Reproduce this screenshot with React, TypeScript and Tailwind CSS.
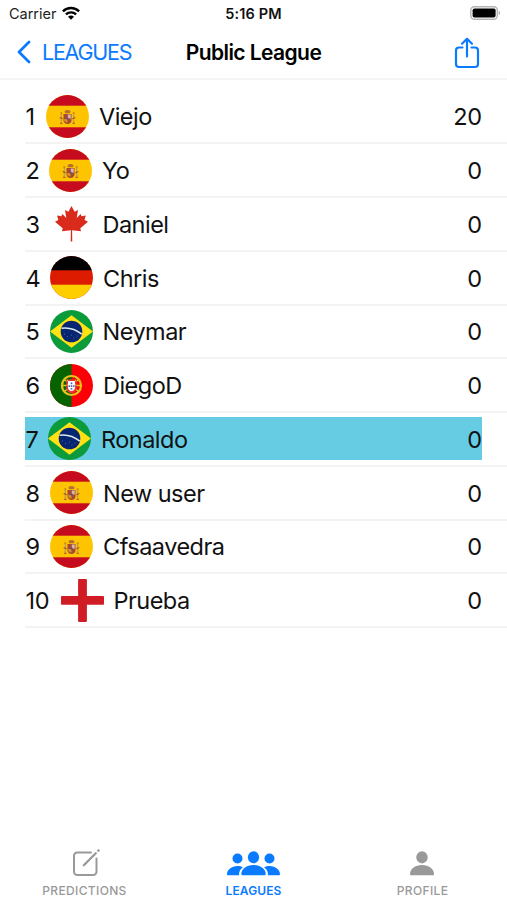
import React from 'react';

type Country = 'spain' | 'canada' | 'germany' | 'brazil' | 'portugal' | 'england';

interface Player {
  rank: number;
  name: string;
  country: Country;
  points: number;
  rankWidth: string;
  isMe?: boolean;
}

const players: Player[] = [
  { rank: 1, name: 'Viejo', country: 'spain', points: 20, rankWidth: 'w-[21px]' },
  { rank: 2, name: 'Yo', country: 'spain', points: 0, rankWidth: 'w-[24px]' },
  { rank: 3, name: 'Daniel', country: 'canada', points: 0, rankWidth: 'w-[24.5px]' },
  { rank: 4, name: 'Chris', country: 'germany', points: 0, rankWidth: 'w-[25px]' },
  { rank: 5, name: 'Neymar', country: 'brazil', points: 0, rankWidth: 'w-[24.5px]' },
  { rank: 6, name: 'DiegoD', country: 'portugal', points: 0, rankWidth: 'w-[25px]' },
  { rank: 7, name: 'Ronaldo', country: 'brazil', points: 0, rankWidth: 'w-[23px]', isMe: true },
  { rank: 8, name: 'New user', country: 'spain', points: 0, rankWidth: 'w-[25px]' },
  { rank: 9, name: 'Cfsaavedra', country: 'spain', points: 0, rankWidth: 'w-[25px]' },
  { rank: 10, name: 'Prueba', country: 'england', points: 0, rankWidth: 'w-[35.5px]' },
];

const SpainFlag = () => (
  <>
    <rect width="43" height="43" fill="#ffc400" />
    <rect width="43" height="10.7" fill="#c60b1e" />
    <rect y="32.3" width="43" height="10.7" fill="#c60b1e" />
    {/* Coat of arms */}
    <path d="M18.5 16.500c.8-2 5.200-2 6 0l-.7 1.800h-4.600z" fill="#b5712d" />
    <path d="M17.500 19h8v6.500c0 4.500-8 4.500-8 0z" fill="#a8482f" />
    <path d="M21.800 19.500h3v4h-3z" fill="#d7b5b0" />
    <path d="M18.200 24h3.300v3.600c-2-.2-3.300-1-3.300-2.300z" fill="#d99021" />
    <circle cx="21.600" cy="23.700" r="1.100" fill="#4c568c" />
    <path d="M15.300 18.500v9M27.700 18.500v9" stroke="#b39a66" strokeWidth="1.200" />
    <path d="M13.700 22.500l3 1.200M26.300 23.700l3-1.200M14 28.300h2.600M26.400 28.300H29" stroke="#a64a29" strokeWidth="1.100" />
    <path d="M14.400 18h1.800M26.800 18h1.800" stroke="#a66320" strokeWidth="1" />
  </>
);

const BrazilFlag = () => (
  <>
    <rect width="43" height="43" fill="#0b9b3b" />
    <path d="M0 21.500 21.500 5.300 43 21.500 21.500 37.700z" fill="#ffe114" />
    <circle cx="21.500" cy="21.500" r="10.800" fill="#062672" />
    <path d="M11.500 18.200c7-1 14.500 1.300 20.300 6" fill="none" stroke="#dce8ef" strokeWidth="1.500" />
    <g fill="#a9b9db">
      <circle cx="14.500" cy="24" r=".4" />
      <circle cx="17.500" cy="26.500" r=".4" />
      <circle cx="21.500" cy="25" r=".4" />
      <circle cx="24" cy="28" r=".4" />
      <circle cx="27" cy="26" r=".4" />
    </g>
  </>
);

const PortugalFlag = () => (
  <>
    <rect width="43" height="43" fill="#fb0007" />
    <rect width="21.500" height="43" fill="#056400" />
    <circle cx="21.500" cy="21.500" r="9.500" fill="none" stroke="#e6c51b" strokeWidth="2.200" />
    <path d="M14.500 15.500 28.500 27.500M28.500 15.500 14.500 27.500M12 21.500h19" stroke="#e6c51b" strokeWidth="1.400" />
    <path d="M16.300 15.500h10.400v8c0 7.500-10.400 7.500-10.400 0z" fill="#e8383b" />
    <path d="M18 17h7v6.300c0 5-7 5-7 0z" fill="#fff" />
    <path d="M20.700 18.500h1.600v1.700h-1.600zM18.500 21.200h1.400v1.800h-1.400zM20.700 21.200h1.600v1.800h-1.600zM23.100 21.200h1.400v1.800h-1.400zM20.700 24h1.600v1.500h-1.600z" fill="#4a60ad" />
    <path d="M17 16.200h1M25 16.200h1M16.800 21h1M25.300 21h1" stroke="#f4d94b" strokeWidth="1.100" />
  </>
);

const flags: Record<Country, React.ReactNode> = {
  spain: <SpainFlag />,
  brazil: <BrazilFlag />,
  portugal: <PortugalFlag />,
  germany: (
    <>
      <rect width="43" height="43" fill="#dd1b00" />
      <rect width="43" height="14.3" fill="#000" />
      <rect y="28.7" width="43" height="14.3" fill="#ffce00" />
    </>
  ),
  canada: (
    <path
      d="M21.500 4 24.600 9.700 28 8.100 26.700 15.900 30.600 12 31.600 14.300 35.800 13.500 34.500 17.900 38 19.800 30.300 26.300 31 29.200 22.100 28.300 22.300 39.500H20.700L20.900 28.300 12 29.200 12.700 26.300 5 19.800 8.300 17.900 7 13.500 11.400 14.300 12.400 12 16.300 15.900 15 8.100 18.400 9.700Z"
      fill="#d92b1c"
    />
  ),
  england: <path d="M18 0h7q.9 0 .9.9v16.200h16.200q.9 0 .9.900v6.800q0 .9-.9.900H25.900v16.400q0 .9-.9.900h-7q-.9 0-.9-.9V25.700H.9q-.9 0-.9-.9V18q0-.9.900-.9h16.200V.9q0-.9.900-.9z" fill="#d01c25" />,
};

const Flag: React.FC<{ country: Country }> = ({ country }) => (
  <svg
    viewBox="0 0 43 43"
    className={`h-[43px] w-[43px] shrink-0 ${country === 'england' ? '' : 'rounded-full'}`}
  >
    {flags[country]}
  </svg>
);

const StatusBar = () => (
  <div className="grid h-[27px] grid-cols-3 items-center px-[9px]">
    <div className="flex items-center gap-[6px]">
      <span className="text-[14.5px] tracking-[-0.02px] text-[#222]">Carrier</span>
      <svg viewBox="0 0 18 14" className="-mt-[2px] h-[14px] w-[18px]" fill="none" stroke="#000" strokeWidth="2.4">
        <path d="M.9 5.300C5.500.9 12.500.9 17.100 5.300" />
        <path d="M3.900 8.400c2.900-2.700 7.300-2.700 10.200 0" />
        <path d="M6 10.700c1.800-1.600 4.200-1.600 6 0L9 13.800z" fill="#000" stroke="none" />
      </svg>
    </div>
    <span className="text-center text-[14.5px] font-semibold tracking-[0.15px] text-[#111]">5:16 PM</span>
    <div className="-mr-[3px] -mt-[1px] flex justify-end">
      <svg viewBox="0 0 31 14" className="h-[14px] w-[31px]">
        <rect x=".8" y=".8" width="26.500" height="12.400" rx="3.500" fill="#fff" stroke="#b4b4b4" strokeWidth="1.400" />
        <rect x="2.600" y="2.500" width="23" height="9" rx="1.800" fill="#000" />
        <path d="M28.700 4.800c2 .6 2 3.800 0 4.400z" fill="#b4b4b4" />
      </svg>
    </div>
  </div>
);

const NavBar = () => (
  <div className="grid h-[53px] grid-cols-[1fr_auto_1fr] items-center border-b-2 border-[#f5f5f5] px-[27px]">
    <div className="-ml-[10px] flex items-center gap-[11px] text-[#0a7aff]">
      <svg viewBox="0 0 14 24" className="-mt-[1px] h-[24px] w-[14px]" fill="none" stroke="currentColor" strokeWidth="2.8" strokeLinecap="round" strokeLinejoin="round">
        <path d="M12 2 2 12l10 10" />
      </svg>
      <span className="text-[21.5px] tracking-[-1.25px]">LEAGUES</span>
    </div>
    <h1 className="text-[21px] font-semibold tracking-[-0.58px] text-black">Public League</h1>
    <div className="flex justify-end text-[#0a7aff]">
      <svg viewBox="0 0 26 32" className="h-[32px] w-[26px]" fill="none" stroke="currentColor" strokeWidth="2.200" strokeLinecap="round" strokeLinejoin="round">
        <path d="M8.500 10.500H5a3 3 0 0 0-3 3V27a3 3 0 0 0 3 3h16a3 3 0 0 0 3-3V13.500a3 3 0 0 0-3-3h-3.500" />
        <path d="M13 19.500V2M8 6.700 13 1.800l5 4.900" />
      </svg>
    </div>
  </div>
);

const PlayerRow: React.FC<{ player: Player }> = ({ player }) => (
  <li className="flex h-[53.75px] items-center border-b-2 border-[#f3f3f3]">
    <div className={`mr-[25px] flex h-[43px] flex-1 items-center text-[23.5px] text-[#111] ${player.isMe ? 'bg-[#65cce4]' : ''}`}>
      <span className={`${player.rankWidth} shrink-0 whitespace-nowrap pl-[0.5px] pt-[1px] tracking-[-0.2px]`}>{player.rank}</span>
      <Flag country={player.country} />
      <span className="ml-[10px] flex-1 pt-[1px] tracking-[-0.52px]">{player.name}</span>
      <span className="pt-[1px] tracking-[-0.2px]">{player.points}</span>
    </div>
  </li>
);

const TabBar = () => (
  <nav className="grid h-[52px] grid-cols-3 text-[12px] font-medium text-[#999]">
    <div className="flex flex-col items-center">
      <svg viewBox="0 0 30 30" className="ml-[2px] h-[30px] w-[30px]" fill="none" stroke="currentColor" strokeWidth="2" strokeLinecap="round">
        <path d="M20 4.500H6.200a3.200 3.200 0 0 0-3.200 3.200v16.100A3.200 3.200 0 0 0 6.200 27h16.100a3.200 3.200 0 0 0 3.200-3.200V10.500" />
        <path d="M12.800 17.200 24.800 5.200" strokeWidth="2.300" />
        <path d="M27.300 2.700l.2-.2" strokeWidth="2.500" />
      </svg>
      <span className="mt-[4px] tracking-[0.35px]">PREDICTIONS</span>
    </div>
    <div className="flex flex-col items-center text-[#0a7aff]">
      <svg viewBox="0 0 54 30" className="-ml-[1px] h-[30px] w-[54px]" fill="currentColor">
        <circle cx="11.500" cy="10.500" r="5" />
        <circle cx="43.500" cy="10.500" r="5" />
        <path d="M1 26.200c0-4.500 4.500-8.200 10.500-8.200 2 0 3.900.4 5.400 1.200-2.400 1.700-3.800 4-3.800 6.500v1.500H2.500C1.500 27.200 1 26.900 1 26.200z" />
        <path d="M54 26.200c0-4.500-4.500-8.200-10.500-8.200-2 0-3.900.4-5.400 1.200 2.400 1.700 3.800 4 3.800 6.500v1.500h10.600c1 0 1.500-.3 1.500-1z" />
        <ellipse cx="27.500" cy="9.300" rx="5.600" ry="6" />
        <path d="M15.300 25.900c0-4.800 5.200-8.900 12.200-8.900s12.200 4.100 12.200 8.900c0 1-.7 1.400-1.800 1.400H17.100c-1.100 0-1.800-.4-1.800-1.400z" />
      </svg>
      <span className="mt-[4px] font-semibold tracking-[0.1px]">LEAGUES</span>
    </div>
    <div className="flex flex-col items-center">
      <svg viewBox="0 0 26 30" className="-ml-[1px] h-[30px] w-[26px]" fill="currentColor">
        <ellipse cx="13" cy="9.300" rx="5.700" ry="6.100" />
        <path d="M1 25.900c0-4.800 5-8.900 12-8.900s12 4.100 12 8.900c0 1-.7 1.400-1.800 1.400H2.800c-1.100 0-1.800-.4-1.800-1.400z" />
      </svg>
      <span className="mt-[4px] tracking-[0.35px]">PROFILE</span>
    </div>
  </nav>
);

const App: React.FC = () => {
  return (
    <div className="flex h-[900px] w-[507px] flex-col overflow-hidden bg-white font-['Inter',sans-serif]">
      <StatusBar />
      <NavBar />
      <ul className="flex-1 pl-[25px] pt-[10.5px]">
        {players.map((player) => (
          <PlayerRow key={player.rank} player={player} />
        ))}
      </ul>
      <TabBar />
    </div>
  );
};

export default App;
